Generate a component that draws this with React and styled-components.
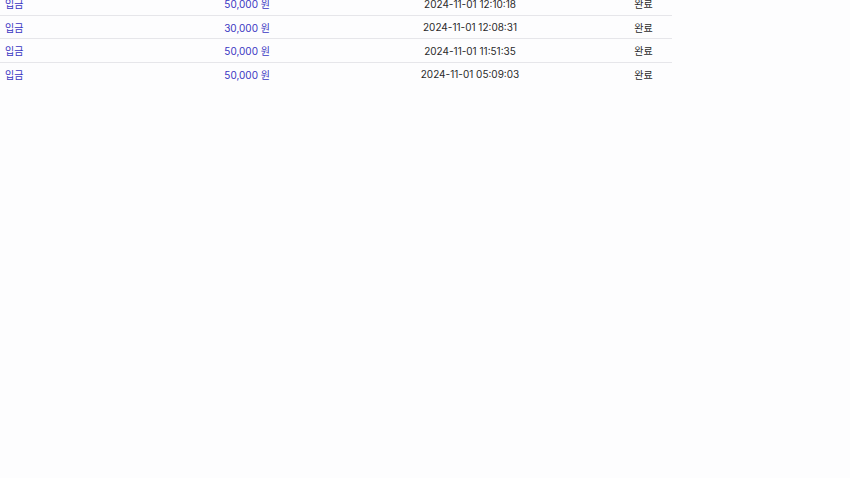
import React from 'react';
import styled, { createGlobalStyle } from 'styled-components';

const GlobalStyle = createGlobalStyle`
  html, body {
    margin: 0;
    padding: 0;
    background: #fdfdfe;
    font-family: Inter, "Noto Sans CJK KR", sans-serif;
  }
`

const Table = styled.div`
  width: 672px;
  margin-top: -8px;
  font-size: 10px;
  color: #222;
`

const Row = styled.div`
  display: grid;
  grid-template-columns: 140px 185px 290px 57px;
  align-items: center;
  height: 21.5px;
  padding-top: 1px;
  border-bottom: 1px solid ${props => props.last ? 'transparent' : '#e6e6ea'};
`

const Type = styled.div`
  padding-left: 5px;
  color: #3a36c2;
`

const Amount = styled.div`
  text-align: right;
  padding-right: 55px;
  color: #3a36c2;
`

const Date = styled.div`
  text-align: center;
  color: #2a2a2a;
`

const Status = styled.div`
  text-align: center;
  color: #2a2a2a;
`

const rows = [
  { type: '입금', amount: '50,000', date: '2024-11-01 12:10:18', status: '완료' },
  { type: '입금', amount: '30,000', date: '2024-11-01 12:08:31', status: '완료' },
  { type: '입금', amount: '50,000', date: '2024-11-01 11:51:35', status: '완료' },
  { type: '입금', amount: '50,000', date: '2024-11-01 05:09:03', status: '완료' },
]

const App = () => {
  return (
    <>
      <GlobalStyle />
      <Table>
        {rows.map((row, index) => (
          <Row key={index} last={index === rows.length - 1}>
            <Type>{row.type}</Type>
            <Amount>{row.amount} 원</Amount>
            <Date>{row.date}</Date>
            <Status>{row.status}</Status>
          </Row>
        ))}
      </Table>
    </>
  )
}

export default App;
